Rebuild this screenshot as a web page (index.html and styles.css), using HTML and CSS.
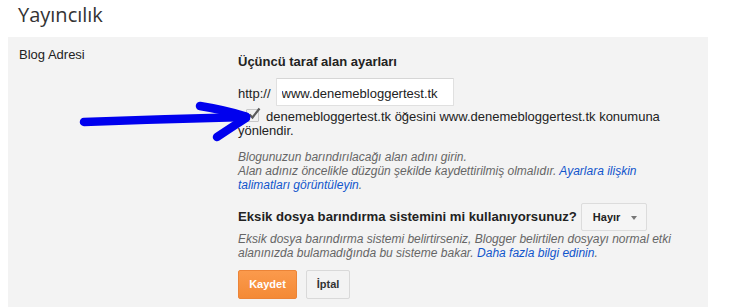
FILE: index.html
```html
<!DOCTYPE html>
<html lang="tr">
<head>
<meta charset="utf-8">
<title>Yayıncılık</title>
<link rel="stylesheet" href="styles.css">
</head>
<body>
<h1 class="title">Yayıncılık</h1>
<section class="panel">
  <div class="label">Blog Adresi</div>
  <div class="content">
    <h2 class="heading">Üçüncü taraf alan ayarları</h2>
    <div class="url-row">
      <span class="prefix">http://</span>
      <input class="url-input" type="text" value="www.denemebloggertest.tk">
    </div>
    <div class="redirect">
      <span class="checkbox"><svg width="16" height="16" viewBox="0 0 16 16"><path d="M3.5 8.5 L6.5 11.5 L13.5 2.5" fill="none" stroke="#5a5a5a" stroke-width="2.2"/></svg></span>denemebloggertest.tk öğesini www.denemebloggertest.tk konumuna yönlendir.
    </div>
    <p class="help">Blogunuzun barındırılacağı alan adını girin.<br>Alan adınız öncelikle düzgün şekilde kaydettirilmiş olmalıdır. <a href="#">Ayarlara ilişkin talimatları görüntüleyin</a>.</p>
    <div class="question-row">
      <span class="question">Eksik dosya barındırma sistemini mi kullanıyorsunuz?</span>
      <button class="dropdown" type="button">Hayır <span class="caret"></span></button>
    </div>
    <p class="help desc">Eksik dosya barındırma sistemi belirtirseniz, Blogger belirtilen dosyayı normal etki alanınızda bulamadığında bu sisteme bakar. <a href="#">Daha fazla bilgi edinin</a>.</p>
    <div class="actions">
      <button class="btn btn-save" type="button">Kaydet</button>
      <button class="btn btn-cancel" type="button">İptal</button>
    </div>
  </div>
</section>
<svg class="arrow" width="741" height="307" viewBox="0 0 741 307">
  <g fill="none" stroke="#0000ee" stroke-width="8.5" stroke-linecap="round" stroke-linejoin="round">
    <path d="M84 122 Q 165 119 246 117"/>
    <path d="M200 106 Q 225 110 246 116.5"/>
    <path d="M246 118 Q 232 127 217 137"/>
  </g>
</svg>
</body>
</html>
```
FILE: styles.css
```css
html, body {
  margin: 0;
  padding: 0;
  background: #fff;
}
body {
  position: relative;
  font-family: "Liberation Sans", Arial, sans-serif;
  font-size: 13px;
  color: #222;
  overflow: hidden;
  height: 307px;
}
.title {
  margin: 0;
  padding: 1px 0 0 18px;
  height: 36px;
  font-family: "Open Sans", sans-serif;
  font-weight: normal;
  font-size: 20px;
  line-height: 27px;
  color: #333;
}
.panel {
  margin-left: 8px;
  width: 700px;
  background: #f3f3f3;
  display: grid;
  grid-template-columns: 219px 445px;
  padding: 10px 0 40px 11px;
  box-sizing: border-box;
}
.label {
  line-height: 15px;
}
.content {
  padding-top: 6.5px;
  min-width: 0;
}
.heading {
  margin: 0;
  font-size: 13px;
  font-weight: bold;
  line-height: 15px;
}
.url-row {
  margin-top: 9.5px;
  display: flex;
  align-items: center;
  gap: 5px;
}
.prefix {
  line-height: 15px;
  padding-top: 3px;
}
.url-input {
  box-sizing: border-box;
  width: 178px;
  height: 28px;
  margin: 0;
  padding: 2px 0 0 5px;
  border: 1px solid #e0e0e0;
  border-top-color: #d6d6d6;
  border-radius: 1px;
  font-family: "Liberation Sans", Arial, sans-serif;
  font-size: 13px;
  color: #222;
  background: #fff;
  outline: none;
}
.redirect {
  margin-top: 2.5px;
  font-size: 13px;
  line-height: 14.5px;
}
.checkbox {
  display: inline-block;
  position: relative;
  width: 11px;
  height: 11px;
  border: 1px solid #c8c8c8;
  border-radius: 1px;
  background: #f1f1f1;
  margin: 0 7px 0 8px;
  vertical-align: -1px;
}
.checkbox svg {
  position: absolute;
  left: -1px;
  top: -4px;
}
.help {
  margin: 11px 0 0;
  font-size: 12px;
  line-height: 14px;
  font-style: italic;
  color: #666;
}
.help a {
  color: #1155cc;
  text-decoration: none;
}
.question-row {
  margin-top: 11px;
  display: flex;
  align-items: center;
  gap: 4px;
}
.question {
  font-size: 13.15px;
  font-weight: bold;
  line-height: 16px;
  color: #222;
  white-space: nowrap;
  flex-shrink: 0;
}
.dropdown {
  flex-shrink: 0;
  box-sizing: border-box;
  height: 28px;
  width: 66px;
  margin: 0;
  padding: 0 0 0 11px;
  border: 1px solid #dcdcdc;
  border-radius: 2px;
  background: #f5f5f5;
  font-family: "Liberation Sans", Arial, sans-serif;
  font-size: 11px;
  font-weight: bold;
  color: #222;
  text-align: left;
  display: flex;
  align-items: center;
}
.caret {
  display: inline-block;
  width: 0;
  height: 0;
  margin-left: 11px;
  margin-top: 3px;
  border-left: 3.5px solid transparent;
  border-right: 3.5px solid transparent;
  border-top: 4px solid #777;
}
.desc {
  margin-top: 1px;
}
.actions {
  margin-top: 10px;
  display: flex;
  gap: 9px;
}
.btn {
  box-sizing: border-box;
  height: 29px;
  margin: 0;
  border-radius: 2px;
  font-family: "Liberation Sans", Arial, sans-serif;
  font-size: 11px;
  font-weight: bold;
  padding: 0;
}
.btn-save {
  width: 59px;
  color: #fff;
  background: linear-gradient(#fb9a4c, #f48a36);
  border: 1px solid #ec8437;
}
.btn-cancel {
  width: 44px;
  color: #333;
  background: #f3f3f3;
  border: 1px solid #d9d9d9;
}
.arrow {
  position: absolute;
  left: 0;
  top: 0;
  pointer-events: none;
}
```
